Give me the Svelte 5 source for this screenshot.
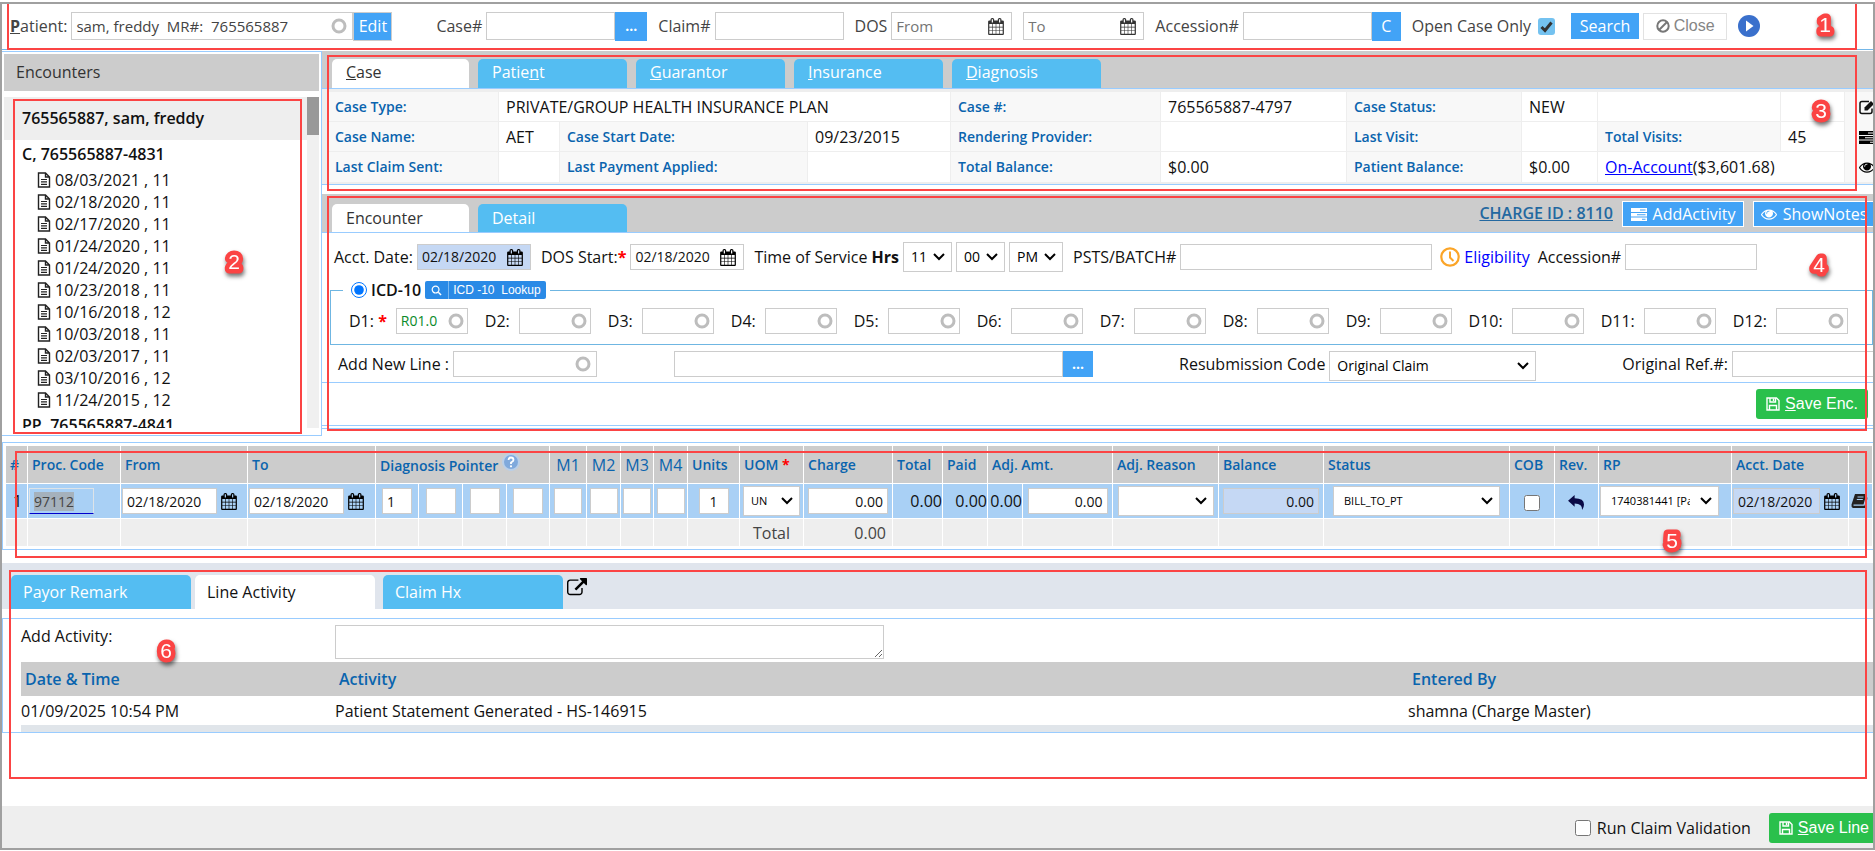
<script lang="ts">
  import { onMount } from 'svelte';

  type Tab = { before: string; key: string; after: string };

  const caseTabs: Tab[] = [
    { before: '', key: 'C', after: 'ase' },
    { before: 'Patie', key: 'n', after: 't' },
    { before: '', key: 'G', after: 'uarantor' },
    { before: '', key: 'I', after: 'nsurance' },
    { before: '', key: 'D', after: 'iagnosis' },
  ];
  const encounterTabs = ['Encounter', 'Detail'];
  const lineTabs = ['Payor Remark', 'Line Activity', 'Claim Hx'];

  const visits = [
    '08/03/2021 , 11',
    '02/18/2020 , 11',
    '02/17/2020 , 11',
    '01/24/2020 , 11',
    '01/24/2020 , 11',
    '10/23/2018 , 11',
    '10/16/2018 , 12',
    '10/03/2018 , 11',
    '02/03/2017 , 11',
    '03/10/2016 , 12',
    '11/24/2015 , 12',
  ];

  let activeCaseTab = $state(0);
  let activeEncounterTab = $state(0);
  let activeLineTab = $state(1);

  let diagnoses = $state(['R01.0', '', '', '', '', '', '', '', '', '', '', '']);
  let pointers = $state(['1', '', '', '']);
  let modifiers = $state(['', '', '', '']);

  let procInput: HTMLInputElement;

  onMount(() => {
    procInput.select();
  });
</script>

{#snippet calendar()}
  <svg class="cal" viewBox="0 0 1664 1792" aria-hidden="true">
    <path
      d="M128 1664h288v-288h-288v288zM480 1664h320v-288h-320v288zM128 1312h288v-320h-288v320zM480 1312h320v-320h-320v320zM128 928h288v-288h-288v288zM864 1664h320v-288h-320v288zM480 928h320v-288h-320v288zM1248 1664h288v-288h-288v288zM864 1312h320v-320h-320v320zM512 448v-288q0-13-9.500-22.500t-22.500-9.500h-64q-13 0-22.500 9.500t-9.500 22.500v288q0 13 9.500 22.500t22.500 9.500h64q13 0 22.500-9.500t9.500-22.500zM1248 1312h288v-320h-288v320zM864 928h320v-288h-320v288zM1248 928h288v-288h-288v288zM1280 448v-288q0-13-9.500-22.500t-22.500-9.500h-64q-13 0-22.500 9.500t-9.500 22.500v288q0 13 9.500 22.500t22.500 9.500h64q13 0 22.500-9.500t9.500-22.500zM1664 384v1280q0 52-38 90t-90 38h-1408q-52 0-90-38t-38-90v-1280q0-52 38-90t90-38h128v-96q0-66 47-113t113-47h64q66 0 113 47t47 113v96h384v-96q0-66 47-113t113-47h64q66 0 113 47t47 113v96h128q52 0 90 38t38 90z"
    />
  </svg>
{/snippet}

{#snippet ring()}
  <svg class="ring" viewBox="0 0 16 16" aria-hidden="true">
    <circle cx="8" cy="8" r="6" fill="none" stroke="#bdbdbd" stroke-width="3" />
  </svg>
{/snippet}

{#snippet eye()}
  <svg class="ico" viewBox="0 0 1792 1792" aria-hidden="true">
    <path
      d="M1664 960q-152-236-381-353 61 104 61 225 0 185-131.500 316.500t-316.500 131.500-316.500-131.500-131.500-316.500q0-121 61-225-229 117-381 353 133 205 333.500 326.500t434.500 121.500 434.500-121.500 333.500-326.500zm-720-384q0-20-14-34t-34-14q-125 0-214.500 89.500t-89.500 214.500q0 20 14 34t34 14 34-14 14-34q0-86 61-147t147-61q20 0 34-14t14-34zm848 384q0 34-20 69-140 230-376.500 368.500t-499.500 138.500-499.500-139-376.500-368q-20-35-20-69t20-69q140-229 376.500-368t499.500-139 499.500 139 376.500 368q20 35 20 69z"
    />
  </svg>
{/snippet}

{#snippet server()}
  <svg class="ico" viewBox="0 0 16 16" aria-hidden="true">
    <path
      fill-rule="evenodd"
      d="M0 2h16v4H0zM9 3.500v1h5.500v-1zM0 7h16v3.500H0zM6 8.300v1h8.500v-1zM0 11.500h16v3.500H0zM11 12.800v1h3.500v-1z"
    />
  </svg>
{/snippet}

{#snippet floppy()}
  <svg class="floppy" viewBox="0 0 14 14" fill="none" stroke="#fff" aria-hidden="true">
    <path stroke-width="1.400" d="M1 1h9.500L13 3.500V13H1zM3.500 13V8.500h7V13" />
    <path stroke-width="1.400" d="M4 1v4h5.500V1M7.500 1.500v2.500" />
  </svg>
{/snippet}

{#snippet badge(n: number)}
  <svg class="badge badge-{n}" viewBox="0 0 28 36" aria-hidden="true">
    <text x="14" y="24" text-anchor="middle">{n}</text>
  </svg>
{/snippet}

<div class="page">
  <form class="search-bar">
    <label for="patient"><b><u>P</u></b>atient:</label>
    <div class="field patient">
      <input id="patient" value="sam, freddy&nbsp; MR#:&nbsp; 765565887" />
      {@render ring()}
    </div>
    <button type="button" class="blue edit">Edit</button>

    <label class="case-label" for="case-no">Case#</label>
    <input id="case-no" class="box w-case" />
    <button type="button" class="blue dots" aria-label="Find case"><b>...</b></button>

    <label class="group" for="claim-no">Claim#</label>
    <input id="claim-no" class="box w-case" />

    <label class="group" for="dos-from">DOS</label>
    <div class="field w-date">
      <input id="dos-from" placeholder="From" />
      {@render calendar()}
    </div>
    <div class="field w-date group">
      <input aria-label="DOS to" placeholder="To" />
      {@render calendar()}
    </div>

    <label class="group" for="acc-no">Accession#</label>
    <input id="acc-no" class="box w-case" />
    <button type="button" class="blue clear">C</button>

    <label class="group" for="open-only">Open Case Only</label>
    <input id="open-only" class="tick" type="checkbox" checked />
    <button type="button" class="blue search">Search</button>
    <button type="button" class="close">
      <svg viewBox="0 0 14 14" aria-hidden="true">
        <circle cx="7" cy="7" r="5.700" />
        <path d="M3 11L11 3" />
      </svg>
      Close
    </button>
    <button type="button" class="play" aria-label="Play tutorial">
      <svg viewBox="0 0 22 22">
        <circle cx="11" cy="11" r="11" fill="#3a70cc" />
        <path d="M8 5.500L15.500 11L8 16.500z" fill="#fff" />
      </svg>
    </button>
    <div class="frame frame-1">{@render badge(1)}</div>
  </form>

  <div class="main">
    <aside class="encounters">
      <h2>Encounters</h2>
      <div class="tree-wrap">
        <div class="tree">
          <div class="tree-head">765565887, sam, freddy</div>
          <div class="tree-case">C, 765565887-4831</div>
          <ul>
            {#each visits as visit}
              <li>
                <svg viewBox="0 0 14 16" fill="none" stroke="#222" aria-hidden="true">
                  <path stroke-width="1.400" d="M1.500 1H8.500L12.500 5V15H1.500zM8.500 1V5H12.500" />
                  <path stroke-width="1.200" d="M4 7.500H10M4 9.900H10M4 12.300H10" />
                </svg>
                {visit}
              </li>
            {/each}
          </ul>
          <div class="tree-case">PP, 765565887-4841</div>
        </div>
        <div class="track"><div class="thumb"></div></div>
      </div>
      <div class="frame frame-2">{@render badge(2)}</div>
    </aside>

    <div class="right">
      <section class="case">
        <div class="tabs">
          {#each caseTabs as tab, i}
            <button type="button" class="tab" class:active={i === activeCaseTab} onclick={() => (activeCaseTab = i)}
              >{tab.before}<u>{tab.key}</u>{tab.after}</button
            >
          {/each}
        </div>
        <div class="case-body">
          <table>
            <colgroup>
              <col class="c171" /><col class="c61" /><col class="c248" /><col /><col class="c210" />
              <col class="c186" /><col class="c175" /><col class="c76" /><col class="c183" /><col class="c64" />
              <col class="c28" />
            </colgroup>
            <tbody>
              <tr>
                <th>Case Type:</th>
                <td colspan="3">PRIVATE/GROUP HEALTH INSURANCE PLAN</td>
                <th>Case #:</th>
                <td>765565887-4797</td>
                <th>Case Status:</th>
                <td>NEW</td>
                <td></td>
                <td></td>
                <td class="tool">
                  <svg class="ico" viewBox="0 0 16 16" fill="none" stroke="#111" aria-hidden="true">
                    <path stroke-width="1.500" d="M10 2.500H3Q1 2.500 1 4.500V12.500Q1 14.500 3 14.500H11Q13 14.500 13 12.500V9.500" />
                    <path fill="#111" stroke="none" d="M5.500 11.500V8.500L12 2L15 5L8.500 11.500z" />
                  </svg>
                </td>
              </tr>
              <tr>
                <th>Case Name:</th>
                <td>AET</td>
                <th>Case Start Date:</th>
                <td>09/23/2015</td>
                <th>Rendering Provider:</th>
                <td></td>
                <th>Last Visit:</th>
                <td></td>
                <th>Total Visits:</th>
                <td>45</td>
                <td class="tool">{@render server()}</td>
              </tr>
              <tr>
                <th>Last Claim Sent:</th>
                <td></td>
                <th>Last Payment Applied:</th>
                <td></td>
                <th>Total Balance:</th>
                <td>$0.00</td>
                <th>Patient Balance:</th>
                <td>$0.00</td>
                <td colspan="2"><a href="#on-account">On-Account</a>($3,601.68)</td>
                <td class="tool">{@render eye()}</td>
              </tr>
            </tbody>
          </table>
        </div>
        <div class="frame frame-3">{@render badge(3)}</div>
      </section>

      <section class="encounter">
        <div class="tabs">
          {#each encounterTabs as tab, i}
            <button
              type="button"
              class="tab"
              class:active={i === activeEncounterTab}
              onclick={() => (activeEncounterTab = i)}>{tab}</button
            >
          {/each}
          <a class="charge" href="#charge">CHARGE ID : 8110</a>
          <button type="button" class="blue action">{@render server()}AddActivity</button>
          <button type="button" class="blue action notes">{@render eye()}ShowNotes</button>
        </div>

        <div class="row dates">
          <label for="acct-date">Acct. Date:</label>
          <div class="field small w-acct locked">
            <input id="acct-date" value="02/18/2020" />
            {@render calendar()}
          </div>
          <label class="group" for="dos-start">DOS Start:<span class="req">*</span></label>
          <div class="field small w-acct">
            <input id="dos-start" value="02/18/2020" />
            {@render calendar()}
          </div>
          <label class="group" for="hour">Time of Service <b>Hrs</b></label>
          <select id="hour" class="w-time"><option>11</option></select>
          <select class="w-time" aria-label="Minutes"><option>00</option></select>
          <select class="w-half" aria-label="AM or PM"><option>PM</option></select>
          <label class="group" for="batch">PSTS/BATCH#</label>
          <input id="batch" class="box low w-batch" />
          <svg class="clock" viewBox="0 0 20 20" fill="none" stroke="#fba528" aria-hidden="true">
            <circle cx="10" cy="10" r="8.700" stroke-width="2.200" />
            <path stroke-width="2" d="M10 4.500V10.500L13.500 14" />
          </svg>
          <a class="elig" href="#eligibility">Eligibility</a>
          <label for="enc-acc">Accession#</label>
          <input id="enc-acc" class="box low w-acc" />
        </div>

        <fieldset>
          <legend>
            <input id="icd10" type="radio" name="icd" checked />
            <label for="icd10">ICD-10</label>
            <button type="button" class="lookup">
              <svg viewBox="0 0 12 12" fill="none" stroke="#fff" aria-hidden="true">
                <circle cx="5" cy="5" r="3.700" stroke-width="1.300" />
                <path stroke-width="1.500" d="M8 8L11 11" />
              </svg>
              <span>ICD -10&nbsp; Lookup</span>
            </button>
          </legend>
          <div class="diags">
            {#each diagnoses as _, i}
              <div class="diag">
                <label for="diag-{i + 1}">D{i + 1}:{#if i === 0}&nbsp;<span class="req">*</span>{/if}</label>
                <div class="field small w-diag">
                  <input id="diag-{i + 1}" bind:value={diagnoses[i]} />
                  {@render ring()}
                </div>
              </div>
            {/each}
          </div>
        </fieldset>

        <div class="row new-line">
          <label for="new-line">Add New Line :</label>
          <div class="field small w-new">
            <input id="new-line" />
            {@render ring()}
          </div>
          <input class="box low desc" aria-label="Line description" />
          <button type="button" class="blue dots low" aria-label="Find procedure"><b>...</b></button>
          <label class="resub" for="resub">Resubmission Code</label>
          <select id="resub" class="w-resub"><option>Original Claim</option></select>
          <label class="orig" for="orig-ref">Original Ref.#:</label>
          <input id="orig-ref" class="box low fill" />
        </div>

        <div class="save-row">
          <button type="button" class="green">{@render floppy()}<span><u>S</u>ave Enc.</span></button>
        </div>
        <div class="frame frame-4">{@render badge(4)}</div>
      </section>
    </div>
  </div>

  <section class="lines">
    <table>
      <colgroup>
        <col class="c22" /><col class="c93" /><col class="c127" /><col class="c128" />
        <col class="c43" /><col class="c44" /><col class="c44" /><col class="c43" />
        <col class="c37" /><col class="c34" /><col class="c33" /><col class="c34" />
        <col class="c52" /><col class="c64" /><col class="c89" /><col class="c50" /><col class="c45" />
        <col class="c35" /><col class="c90" /><col class="c106" /><col class="c105" /><col />
        <col class="c45" /><col class="c44" /><col class="c133" /><col class="c117" /><col class="c24" />
      </colgroup>
      <thead>
        <tr>
          <th>#</th>
          <th>Proc. Code</th>
          <th>From</th>
          <th>To</th>
          <th colspan="4">
            Diagnosis Pointer
            <svg class="help" viewBox="0 0 18 18" aria-hidden="true">
              <circle cx="9" cy="9" r="8" fill="#7fa9dc" stroke="#b9cfe9" stroke-width="2" />
              <path d="M6.500 7Q6.500 4.500 9 4.500T11.500 7Q11.500 8.300 9 9.500V11" fill="none" stroke="#fff" stroke-width="1.800" />
              <circle cx="9" cy="13.300" r="1.100" fill="#fff" />
            </svg>
          </th>
          <th class="mod">M1</th>
          <th class="mod">M2</th>
          <th class="mod">M3</th>
          <th class="mod">M4</th>
          <th>Units</th>
          <th>UOM <span class="req">*</span></th>
          <th>Charge</th>
          <th>Total</th>
          <th>Paid</th>
          <th colspan="2">Adj. Amt.</th>
          <th>Adj. Reason</th>
          <th>Balance</th>
          <th>Status</th>
          <th>COB</th>
          <th>Rev.</th>
          <th>RP</th>
          <th>Acct. Date</th>
          <th></th>
        </tr>
      </thead>
      <tbody>
        <tr>
          <td class="num">1</td>
          <td class="tight"><input class="proc" aria-label="Procedure code" value="97112" bind:this={procInput} /></td>
          <td class="tight">
            <div class="date-cell"><input class="box line" aria-label="From" value="02/18/2020" />{@render calendar()}</div>
          </td>
          <td class="tight">
            <div class="date-cell"><input class="box line" aria-label="To" value="02/18/2020" />{@render calendar()}</div>
          </td>
          {#each pointers as _, i}
            <td class="mid"><input class="box w30" aria-label="Pointer {i + 1}" bind:value={pointers[i]} /></td>
          {/each}
          {#each modifiers as _, i}
            <td class="mid"><input class="box w28" aria-label="Modifier {i + 1}" bind:value={modifiers[i]} /></td>
          {/each}
          <td class="mid"><input class="box w30 units" aria-label="Units" value="1" /></td>
          <td class="mid"><select class="tiny w-uom" aria-label="UOM"><option>UN</option></select></td>
          <td class="mid"><input class="box w80 amount" aria-label="Charge" value="0.00" /></td>
          <td class="sum">0.00</td>
          <td class="sum">0.00</td>
          <td class="sum">0.00</td>
          <td class="mid"><input class="box w80 amount" aria-label="Adjustment" value="0.00" /></td>
          <td class="mid"><select class="w96" aria-label="Adj. Reason"><option></option></select></td>
          <td class="mid"><input class="box w96 amount locked" aria-label="Balance" value="0.00" /></td>
          <td class="mid"><select class="tiny w-status" aria-label="Status"><option>BILL_TO_PT</option></select></td>
          <td class="mid"><input type="checkbox" class="check" aria-label="COB" /></td>
          <td class="mid">
            <svg class="reply" viewBox="0 0 18 16" aria-hidden="true">
              <path d="M0 6L7 0V3.500Q17 3.500 17 10Q17 13 15 16Q15.500 9 7 9V12.500z" fill="#0a0a46" />
            </svg>
          </td>
          <td class="tight"><select class="tiny w-rp" aria-label="RP"><option>1740381441 [Paid]</option></select></td>
          <td class="tight">
            <div class="date-cell">
              <input class="box w-ad locked" aria-label="Acct. Date" value="02/18/2020" />{@render calendar()}
            </div>
          </td>
          <td class="last">
            <svg class="book" viewBox="0 0 17 16" aria-hidden="true">
              <path d="M4 1H15.500L12.500 11.500H2.500V12.800H13.500L16.300 4V6L14 15H2Q0 14 0.500 11.500z" fill="#222" />
              <path d="M6.500 4H12.500M5.800 6.500H11.800" stroke="#a9d0f5" />
            </svg>
          </td>
        </tr>
      </tbody>
      <tfoot>
        <tr>
          {#each { length: 13 } as _}<td></td>{/each}
          <td class="mid">Total</td>
          <td class="total">0.00</td>
          {#each { length: 12 } as _}<td></td>{/each}
        </tr>
      </tfoot>
    </table>
    <div class="frame frame-5">{@render badge(5)}</div>
  </section>

  <section class="activity">
    <div class="line-tabs">
      {#each lineTabs as tab, i}
        <button type="button" class="tab" class:active={i === activeLineTab} onclick={() => (activeLineTab = i)}
          >{tab}</button
        >
      {/each}
      <svg class="external" viewBox="0 0 1792 1792" aria-hidden="true">
        <path
          d="M1408 928v320q0 119-84.500 203.500t-203.500 84.500h-832q-119 0-203.500-84.500t-84.500-203.500v-832q0-119 84.500-203.500t203.500-84.500h704q14 0 23 9t9 23v64q0 14-9 23t-23 9h-704q-66 0-113 47t-47 113v832q0 66 47 113t113 47h832q66 0 113-47t47-113v-320q0-14 9-23t23-9h64q14 0 23 9t9 23zm384-864v512q0 26-19 45t-45 19-45-19l-176-176-652 652q-10 10-23 10t-23-10l-114-114q-10-10-10-23t10-23l652-652-176-176q-19-19-19-45t19-45 45-19h512q26 0 45 19t19 45z"
        />
      </svg>
    </div>
    <div class="activity-body">
      <div class="add">
        <label for="add-activity">Add Activity:</label>
        <textarea id="add-activity"></textarea>
      </div>
      <table>
        <colgroup><col class="c314" /><col /><col class="c465" /></colgroup>
        <thead>
          <tr><th>Date &amp; Time</th><th>Activity</th><th>Entered By</th></tr>
        </thead>
        <tbody>
          <tr><td>01/09/2025 10:54 PM</td><td>Patient Statement Generated - HS-146915</td><td>shamna (Charge Master)</td></tr>
        </tbody>
      </table>
      <div class="strip"></div>
    </div>
    <div class="frame frame-6">{@render badge(6)}</div>
  </section>

  <footer>
    <input id="validate" type="checkbox" class="check" />
    <label for="validate">Run Claim Validation</label>
    <button type="button" class="green">{@render floppy()}<span><u>S</u>ave Line</span></button>
  </footer>
</div>

<style>
  :global(body) {
    margin: 0;
    background: #fff;
  }

  .page,
  .page :global(*) {
    box-sizing: border-box;
  }

  .page {
    display: flex;
    flex-direction: column;
    min-height: calc(100vh - 3px);
    margin-top: 2px;
    border: 2px solid #a0a0a0;
    overflow: hidden;
    font: 16px/22px 'Open Sans', sans-serif;
    color: #111;
    white-space: nowrap;
  }

  input,
  select,
  button,
  textarea {
    margin: 0;
    font: inherit;
    color: inherit;
  }

  button {
    padding: 0;
    border: 0;
    flex: none;
  }

  label {
    flex: none;
  }

  /* inputs */
  .box,
  .field {
    height: 28px;
    border: 1px solid #ccc;
    background: #fff;
    flex: none;
  }

  .box {
    padding: 0 4px;
    border-radius: 0;
    min-width: 0;
    font-size: 14px;
  }

  .field {
    display: flex;
    align-items: center;
    padding: 0 5px 0 4px;
  }

  .field input {
    flex: 1;
    width: 0;
    padding: 0;
    border: 0;
    background: none;
    outline: none;
    font-size: 14px;
  }

  .box.low,
  .field.small {
    height: 26px;
  }

  .field.locked,
  .box.locked {
    background: #c5d8f4;
  }

  .cal {
    width: 16px;
    height: 17px;
    flex: none;
  }

  .ring {
    width: 16px;
    height: 16px;
    flex: none;
  }

  .ico {
    width: 16px;
    height: 16px;
    flex: none;
  }

  select {
    appearance: none;
    height: 30px;
    padding: 0 20px 0 7px;
    border: 1px solid #ccc;
    border-radius: 0;
    background: #fff
      url("data:image/svg+xml,%3Csvg xmlns='http://www.w3.org/2000/svg' viewBox='0 0 12 8'%3E%3Cpath d='M1 1L6 6L11 1' fill='none' stroke='%23000' stroke-width='2'/%3E%3C/svg%3E")
      no-repeat right 6px center / 12px 8px;
    font-size: 14px;
    color: #000;
    flex: none;
  }

  select.tiny {
    font-size: 11px;
  }

  .check {
    width: 16px;
    height: 16px;
    flex: none;
  }

  .req {
    color: #f00;
    font-weight: 700;
  }

  /* buttons */
  .blue {
    background: #42a3f6;
    color: #fff;
  }

  .green {
    display: flex;
    align-items: center;
    gap: 5px;
    height: 30px;
    padding: 0 10px;
    border-radius: 3px;
    background: #2ac04c;
    color: #fff;
    font-family: 'Liberation Sans', Arial, sans-serif;
  }

  .floppy {
    width: 14px;
    height: 14px;
  }

  .dots {
    width: 32px;
    height: 29px;
    font-size: 14px;
  }

  .dots.low {
    width: 30px;
    height: 26px;
  }

  /* search bar */
  .search-bar {
    position: relative;
    display: flex;
    align-items: center;
    gap: 4px;
    height: 46px;
    padding: 0 0 1px 8px;
    border-bottom: 1px solid #74b7e8;
    color: #444;
  }

  .search-bar .field input,
  .search-bar .box {
    font-size: 15px;
  }

  .search-bar .blue:not(.search) {
    height: 29px;
    margin-left: -4px;
  }

  .patient {
    width: 282px;
  }

  .edit {
    width: 39px;
    border: 1px solid #ccc;
  }

  .case-label {
    margin-left: 40px;
  }

  .group {
    margin-left: 7px;
  }

  .w-case {
    width: 129px;
  }

  .w-date {
    width: 121px;
    padding-right: 7px;
  }

  .w-date .cal {
    fill: #333;
  }

  .clear {
    width: 29px;
  }

  .tick {
    appearance: none;
    width: 17px;
    height: 17px;
    margin: 0 12px 0 3px;
    border-radius: 3px;
    background: #74c2f0
      url("data:image/svg+xml,%3Csvg xmlns='http://www.w3.org/2000/svg' viewBox='0 0 17 17'%3E%3Cpath d='M3.500 9L7 12.500L13.500 4.500' fill='none' stroke='%23333' stroke-width='3'/%3E%3C/svg%3E")
      center / 17px 17px;
  }

  .search {
    width: 68px;
    height: 26px;
  }

  .close {
    display: flex;
    align-items: center;
    justify-content: center;
    gap: 4px;
    width: 84px;
    height: 27px;
    border: 1px solid #e2e2e2;
    background: #fff;
    color: #858585;
    font-family: 'Liberation Sans', Arial, sans-serif;
  }

  .close svg {
    width: 14px;
    height: 14px;
    fill: none;
    stroke: #777;
    stroke-width: 2;
  }

  .play {
    width: 22px;
    height: 22px;
    margin-left: 7px;
    background: none;
  }

  .play svg {
    display: block;
  }

  /* encounters tree */
  .main {
    display: grid;
    grid-template-columns: 320px 1fr;
    align-items: start;
    margin-top: 1px;
  }

  .right {
    min-width: 0;
  }

  .encounters {
    position: relative;
    padding: 2px 2px 7px;
    border: 1px solid #9cf;
    border-left: 0;
  }

  h2 {
    margin: 0 0 6px;
    padding-left: 12px;
    background: #ccc;
    color: #333;
    font-size: 16px;
    font-weight: 400;
    line-height: 37px;
  }

  .tree-wrap {
    display: flex;
    height: 331px;
    overflow: hidden;
  }

  .tree {
    flex: 1;
  }

  .tree-head,
  .tree-case {
    padding-left: 18px;
    font-weight: 600;
    line-height: 29px;
  }

  .tree-head {
    background: #eee;
    line-height: 43px;
  }

  ul {
    margin: 0;
    padding: 0 0 0 33px;
    list-style: none;
  }

  li {
    display: flex;
    align-items: center;
    gap: 4px;
    height: 22px;
  }

  li svg {
    width: 14px;
    height: 16px;
  }

  .track {
    width: 12px;
    background: #f0f0f0;
  }

  .thumb {
    height: 38px;
    background: #999;
  }

  /* tabs */
  .tabs {
    display: flex;
    align-items: flex-end;
    gap: 9px;
    height: 38px;
    padding-left: 10px;
    border-bottom: 1px solid #9cf;
    background: #ccc;
  }

  .tab {
    width: 149px;
    height: 29px;
    padding: 0 14px 4px;
    border-radius: 5px 5px 0 0;
    background: #54bdf2;
    color: #fff;
    text-align: left;
  }

  .tabs .tab.active {
    width: 137px;
    background: #fff;
    color: #333;
  }

  /* case summary */
  .case,
  .encounter,
  .lines,
  .activity {
    position: relative;
  }

  .case-body {
    padding: 3px 0 2px 6px;
    border-bottom: 1px solid #9cf;
    background: #eee;
  }

  table {
    width: 100%;
    table-layout: fixed;
    border-collapse: separate;
    border-spacing: 0;
  }

  .case th,
  .case td {
    height: 30px;
    padding: 0 0 0 7px;
    border-right: 1px solid #eee;
    border-bottom: 1px solid #eee;
    background: #fff;
    text-align: left;
  }

  .case tr:last-child > * {
    border-bottom: 0;
  }

  th {
    color: #0a64ae;
    font-size: 14px;
    font-weight: 600;
    text-align: left;
  }

  .case th {
    background: #f8f8f8;
  }

  .case .tool {
    padding-left: 14px;
    border: 0;
    background: #f8f8f8;
    line-height: 0;
  }

  .case a {
    color: #00f;
  }

  /* encounter form */
  .encounter {
    margin-top: 9px;
    border-bottom: 1px solid #9cf;
  }

  .encounter .tabs {
    height: 39px;
  }

  .encounter .tab {
    height: 28px;
    padding-bottom: 1px;
  }

  .charge {
    align-self: center;
    margin-left: auto;
    color: #2368a0;
    font-weight: 600;
  }

  .action {
    display: flex;
    align-items: center;
    justify-content: center;
    align-self: flex-start;
    gap: 6px;
    width: 122px;
    height: 26px;
    margin-top: 7px;
    border: 1px solid #fff;
    fill: #fff;
  }

  .action.notes {
    margin-right: -2px;
  }

  .row {
    display: flex;
    align-items: center;
    gap: 4px;
  }

  .dates {
    height: 48px;
    padding-left: 12px;
  }

  .dates .group {
    margin-left: 6px;
  }

  .w-acct {
    width: 114px;
    padding-right: 7px;
  }

  .w-time {
    width: 49px;
  }

  .w-half {
    width: 54px;
  }

  .w-batch {
    width: 252px;
  }

  .clock {
    width: 20px;
    height: 20px;
    margin-left: 4px;
    flex: none;
  }

  .elig {
    margin-right: 4px;
    color: #00f;
    text-decoration: none;
  }

  .w-acc {
    width: 132px;
  }

  fieldset {
    min-width: 0;
    margin: 0 0 0 8px;
    padding: 9px 0 10px 18px;
    border: 1px solid #6fb6e2;
  }

  legend {
    display: flex;
    align-items: center;
    gap: 4px;
    height: 18px;
    margin-left: -6px;
    padding: 0 4px 0 8px;
    font-weight: 600;
  }

  legend input {
    width: 16px;
    height: 16px;
  }

  .lookup {
    display: flex;
    align-items: center;
    width: 121px;
    height: 18px;
    border-radius: 2px;
    background: #2a8ae6;
    color: #fff;
    font: 12px/18px 'Liberation Sans', Arial, sans-serif;
  }

  .lookup svg {
    width: 11px;
    height: 11px;
    margin: 0 6px;
  }

  .lookup span {
    padding-left: 4px;
    border-left: 1px solid #7ab8f0;
  }

  .diags {
    display: flex;
    gap: 17px;
  }

  .diag {
    display: flex;
    align-items: center;
    gap: 9px;
  }

  .w-diag {
    width: 72px;
    padding-right: 3px;
  }

  .w-diag input {
    color: #0a8a2a;
  }

  .new-line {
    align-items: flex-start;
    height: 38px;
    padding: 6px 0 0 16px;
    border-bottom: 1px solid #9cf;
    line-height: 26px;
  }

  .w-new {
    width: 144px;
  }

  .desc {
    flex: 1;
    margin: 0 -4px 0 73px;
  }

  .resub {
    margin-left: 82px;
  }

  .w-resub {
    width: 207px;
  }

  .orig {
    margin-left: 82px;
  }

  .new-line .fill {
    width: 141px;
    border-right: 0;
  }

  .save-row {
    display: flex;
    justify-content: flex-end;
    margin-bottom: 2px;
    padding: 6px 5px;
    border-bottom: 1px solid #9cf;
  }

  /* service lines */
  .lines {
    margin-top: 6px;
    padding: 3px 0 3px 3px;
    border: 1px solid #9cf;
    border-right: 0;
  }

  .lines th,
  .lines td {
    height: 38px;
    padding: 0 0 0 4px;
    border-right: 1px solid #fff;
    border-bottom: 1px solid #fff;
    background: #ccc;
    line-height: 20px;
  }

  .lines .mod {
    padding: 0;
    font-size: 16px;
    font-weight: 400;
    text-align: center;
  }

  .help {
    width: 18px;
    height: 18px;
  }

  .lines tbody td {
    height: 35px;
    background: #a9d0f5;
  }

  .lines tfoot td {
    height: 27px;
    border-bottom: 0;
    background: #eee;
    color: #444;
  }

  .lines .num {
    padding-left: 7px;
  }

  .lines .tight {
    padding: 0 0 0 1px;
  }

  .lines .mid {
    padding: 0;
    text-align: center;
  }

  .lines .sum,
  .lines .total {
    padding: 0;
    text-align: right;
  }

  .lines .total {
    padding-right: 6px;
  }

  .lines .box {
    display: inline-block;
    height: 26px;
    vertical-align: middle;
  }

  .lines .amount {
    text-align: right;
  }

  .lines .units {
    text-align: center;
  }

  .lines select,
  .lines .check {
    vertical-align: middle;
  }

  .lines .last {
    padding: 0 0 0 2px;
    line-height: 0;
  }

  .proc {
    display: block;
    width: 65px;
    height: 26px;
    padding: 0 4px;
    border: 1px solid #dde3e8;
    border-bottom-color: #00c;
    background: none;
    color: #444;
    font-size: 14px;
    outline: none;
  }

  .proc::selection {
    background: #a5b1bc;
    color: #444;
  }

  .date-cell {
    display: flex;
    align-items: center;
    gap: 4px;
  }

  .line { width: 95px; }
  .w-ad { width: 87px; }
  .w28 { width: 28px; }
  .w30 { width: 30px; }
  .w80 { width: 80px; }
  .w96 { width: 96px; }
  .w-uom { width: 57px; }
  .w-status { width: 167px; }
  .w-rp { width: 119px; }

  .w-status,
  .w-rp {
    padding-left: 10px;
  }

  .lines .w-rp {
    padding-right: 28px;
  }

  .reply {
    width: 17px;
    height: 15px;
    vertical-align: middle;
  }

  .book {
    width: 17px;
    height: 16px;
  }

  .c22 { width: 22px; }
  .c24 { width: 24px; }
  .c28 { width: 28px; }
  .c33 { width: 33px; }
  .c34 { width: 34px; }
  .c35 { width: 35px; }
  .c37 { width: 37px; }
  .c43 { width: 43px; }
  .c44 { width: 44px; }
  .c45 { width: 45px; }
  .c50 { width: 50px; }
  .c52 { width: 52px; }
  .c61 { width: 61px; }
  .c64 { width: 64px; }
  .c76 { width: 76px; }
  .c89 { width: 89px; }
  .c90 { width: 90px; }
  .c93 { width: 93px; }
  .c105 { width: 105px; }
  .c106 { width: 106px; }
  .c117 { width: 117px; }
  .c127 { width: 127px; }
  .c128 { width: 128px; }
  .c133 { width: 133px; }
  .c171 { width: 171px; }
  .c175 { width: 175px; }
  .c183 { width: 183px; }
  .c186 { width: 186px; }
  .c210 { width: 210px; }
  .c248 { width: 248px; }
  .c314 { width: 314px; }
  .c465 { width: 465px; }

  /* line activity */
  .activity {
    margin-top: 13px;
  }

  .line-tabs {
    display: flex;
    gap: 4px;
    height: 46px;
    padding: 12px 0 0 9px;
    background: #e0e5ed;
  }

  .line-tabs .tab {
    width: 180px;
    height: 34px;
    padding: 0 12px;
  }

  .line-tabs .tab.active {
    margin-right: 4px;
    background: #fff;
    color: #111;
  }

  .external {
    width: 20px;
    height: 20px;
    margin-top: 3px;
  }

  .activity-body {
    margin-top: 9px;
    padding: 6px 0 0 18px;
    border: 1px solid #9cf;
    border-right: 0;
  }

  .add {
    display: flex;
    padding-bottom: 3px;
  }

  .add label {
    width: 314px;
  }

  textarea {
    width: 549px;
    height: 34px;
    border: 1px solid #ccc;
  }

  .activity th {
    height: 34px;
    padding: 0 4px;
    background: #ccc;
    font-size: 16px;
  }

  .activity td {
    height: 29px;
    padding: 0;
  }

  .strip {
    height: 7px;
    background: #e0e5ea;
  }

  footer {
    display: flex;
    align-items: center;
    justify-content: flex-end;
    gap: 6px;
    height: 42px;
    margin-top: auto;
    padding-top: 1px;
    background: #eee;
  }

  footer .green {
    margin: 0 -6px 0 12px;
  }

  /* numbered callouts */
  .frame {
    position: absolute;
    border: 2px solid #fb4444;
    pointer-events: none;
  }

  .frame-1 { inset: 0 16px -1px 5px; border-top: 0; }
  .frame-2 { inset: 47px 19px 1px 11px; }
  .frame-3 { inset: 4px 16px -6px 5px; }
  .frame-4 { inset: 2px 6px -3px 5px; }
  .frame-5 { inset: 8px 6px -9px 12px; }
  .frame-6 { inset: 7px 6px -46px 7px; }

  .badge {
    position: absolute;
    width: 28px;
    height: 36px;
    overflow: visible;
    filter: drop-shadow(1px 3px 2px rgba(0, 0, 0, 0.55));
  }

  .badge text {
    fill: #fff;
    stroke: #fb4444;
    stroke-width: 9px;
    stroke-linejoin: round;
    paint-order: stroke;
    font: 21px 'Liberation Sans', Arial, sans-serif;
  }

  .badge-1 { top: 4px; right: 16px; }
  .badge-2 { top: 144px; right: 52px; }
  .badge-3 { top: 37px; right: 20px; }
  .badge-4 { top: 50px; right: 32px; }
  .badge-5 { top: 71px; right: 179px; }
  .badge-6 { top: 62px; left: 141px; }
</style>
